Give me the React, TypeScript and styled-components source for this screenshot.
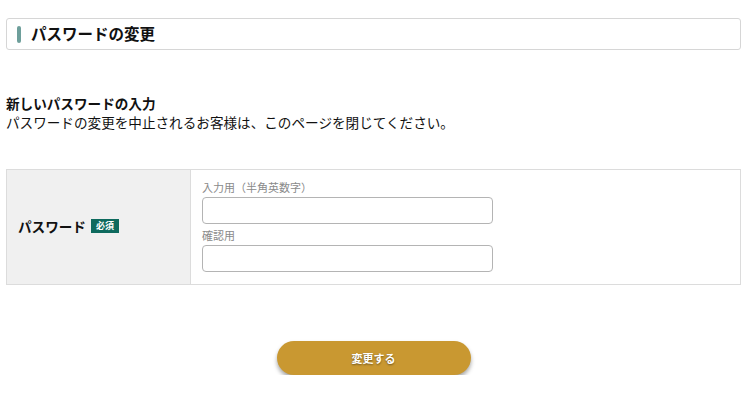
import styled, { createGlobalStyle } from "styled-components";

const GlobalStyle = createGlobalStyle`
  body {
    margin: 0;
    background: #fff;
    color: #111;
    font-family: "Noto Sans CJK JP", "Noto Sans", sans-serif;
  }
`

const StyledPage = styled.div`
  padding: 18px 6px 0;
`

const StyledTitleBox = styled.header`
  display: flex;
  align-items: center;
  gap: 10px;
  height: 32px;
  padding: 0 10px;
  border: 1px solid #d6d6d6;
  border-radius: 3px;
  box-sizing: border-box;
`

const StyledAccent = styled.span`
  width: 4px;
  height: 17px;
  border-radius: 2px;
  background: #6e9f9b;
`

const StyledTitle = styled.h1`
  margin: 0;
  font-size: 15.5px;
  font-weight: 700;
  line-height: 1;
`

const StyledIntro = styled.section`
  margin-top: 44px;
  h2 {
    margin: 0;
    font-size: 13.6px;
    font-weight: 700;
    line-height: 19px;
  }
  p {
    margin: 0;
    font-size: 13.6px;
    line-height: 19px;
  }
`

const StyledTable = styled.div`
  display: grid;
  grid-template-columns: 184px 1fr;
  margin-top: 37px;
  height: 116px;
  border: 1px solid #dcdcdc;
  box-sizing: border-box;
`

const StyledHeadCell = styled.div`
  display: flex;
  align-items: center;
  gap: 5px;
  padding: 0 0 2px 11px;
  background: #f0f0f0;
  border-right: 1px solid #dcdcdc;
  font-size: 13.6px;
  font-weight: 700;
`

const StyledBadge = styled.span`
  background: #0e6a5e;
  color: #fff;
  font-size: 9px;
  font-weight: 700;
  padding: 1px 5px;
  line-height: 12px;
`

const StyledBodyCell = styled.div`
  display: flex;
  flex-direction: column;
  padding: 9px 0 0 11px;
`

const StyledLabel = styled.label`
  font-size: 11px;
  color: #8a8a8a;
  line-height: 16px;
  margin-bottom: 2px;
`

const StyledInput = styled.input`
  width: 291px;
  height: 27px;
  box-sizing: border-box;
  border: 1px solid #b4b4b4;
  border-radius: 4px;
  margin-bottom: 3px;
`

const StyledActions = styled.div`
  display: flex;
  justify-content: center;
  margin-top: 56px;
`

const StyledButton = styled.button`
  width: 194px;
  height: 34px;
  border: none;
  border-radius: 17px;
  background: #c99831;
  color: #fff;
  font-family: inherit;
  font-size: 11px;
  font-weight: 700;
  text-shadow: 0 1px 2px rgba(0, 0, 0, 0.45);
  box-shadow: 0 3px 4px rgba(0, 0, 0, 0.35);
`

export default function App() {
  return (
    <>
      <GlobalStyle />
      <StyledPage>
        <StyledTitleBox>
          <StyledAccent />
          <StyledTitle>パスワードの変更</StyledTitle>
        </StyledTitleBox>
        <StyledIntro>
          <h2>新しいパスワードの入力</h2>
          <p>パスワードの変更を中止されるお客様は、このページを閉じてください。</p>
        </StyledIntro>
        <StyledTable>
          <StyledHeadCell>
            パスワード
            <StyledBadge>必須</StyledBadge>
          </StyledHeadCell>
          <StyledBodyCell>
            <StyledLabel>入力用（半角英数字）</StyledLabel>
            <StyledInput type="password" />
            <StyledLabel>確認用</StyledLabel>
            <StyledInput type="password" />
          </StyledBodyCell>
        </StyledTable>
        <StyledActions>
          <StyledButton>変更する</StyledButton>
        </StyledActions>
      </StyledPage>
    </>
  )
}
